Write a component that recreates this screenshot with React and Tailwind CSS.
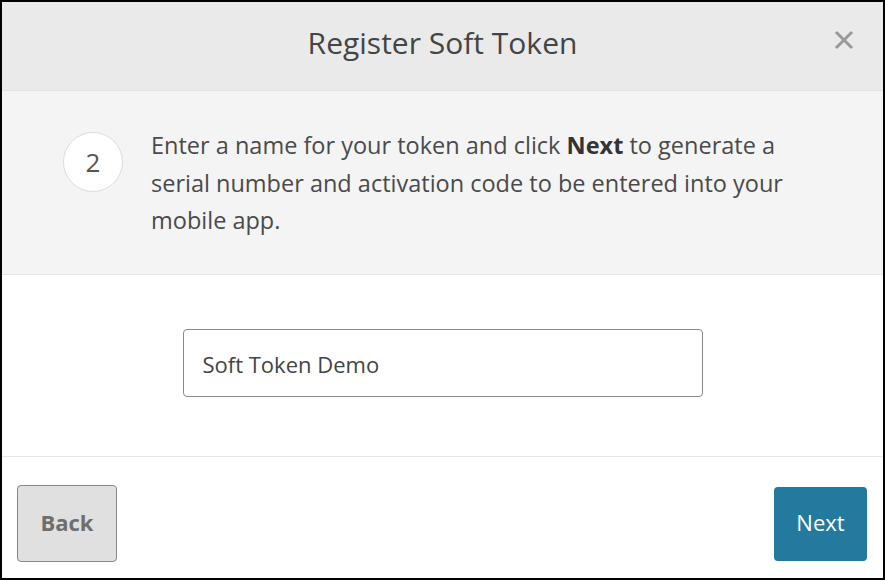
export default function App() {
  return (
    <div
      className="w-[885px] h-[580px] border-2 border-black bg-white flex flex-col overflow-hidden text-[#4a4a4a]"
      style={{ fontFamily: '"Open Sans", "Noto Sans", sans-serif' }}
    >
      {/* Header */}
      <header className="relative h-[89px] shrink-0 bg-[#eaeaea] border-b border-[#e2e2e2] flex items-center justify-center">
        <h1 className="text-[30px] text-[#444] leading-none -mt-[6px]">Register Soft Token</h1>
        <button
          type="button"
          aria-label="Close"
          className="absolute right-[28px] top-[27px] w-[22px] h-[22px] flex items-center justify-center"
        >
          <svg viewBox="0 0 20 20" className="w-[20px] h-[20px]" fill="none" stroke="#9a9a9a" strokeWidth="3" strokeLinecap="square">
            <path d="M3 3 L17 17 M17 3 L3 17" />
          </svg>
        </button>
      </header>

      {/* Step */}
      <section className="h-[184px] shrink-0 bg-[#f4f4f4] border-b border-[#e4e4e4] flex items-start pl-[61px] pr-8 pt-[36px]">
        <div className="w-[60px] h-[60px] shrink-0 rounded-full bg-white border border-[#dcdcdc] flex items-center justify-center text-[26px] text-[#555] mt-[5px]">
          2
        </div>
        <p className="ml-[28px] text-[23.5px] leading-[37.5px] text-[#4a4a4a]">
          Enter a name for your token and click <b className="font-bold text-[#333]">Next</b> to generate a
          <br />
          serial number and activation code to be entered into your
          <br />
          mobile app.
        </p>
      </section>

      {/* Body */}
      <section className="h-[182px] shrink-0 border-b border-[#e6e6e6] flex justify-center pt-[54px]">
        <input
          type="text"
          defaultValue="Soft Token Demo"
          className="w-[520px] h-[68px] border border-[#8a8a8a] rounded-[4px] px-[19px] pt-[2px] text-[22px] text-[#444] outline-none"
        />
      </section>

      {/* Footer */}
      <footer className="flex-1 flex items-end justify-between pl-[15px] pr-[16px] pb-[16px]">
        <button
          type="button"
          className="w-[100px] h-[77px] pb-[3px] bg-[#e0e0e0] border border-[#888] rounded-[4px] text-[22px] font-bold text-[#6e6e6e]"
        >
          Back
        </button>
        <button
          type="button"
          className="w-[93px] h-[74px] mb-[1px] pb-[4px] bg-[#247a9e] rounded-[4px] text-[22px] text-white"
        >
          Next
        </button>
      </footer>
    </div>
  );
}
